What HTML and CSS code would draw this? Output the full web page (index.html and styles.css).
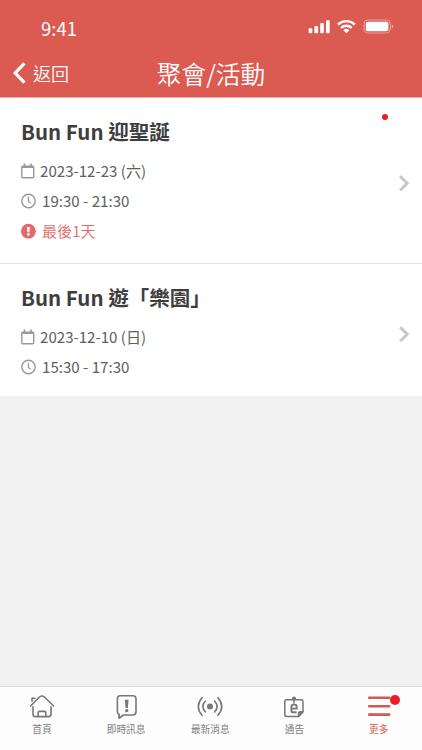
FILE: index.html
```html
<!DOCTYPE html>
<html lang="zh-Hant">
<head>
<meta charset="utf-8">
<title>聚會/活動</title>
<link rel="stylesheet" href="styles.css">
</head>
<body>
<div class="app">
  <header class="header">
    <div class="status">
      <span class="clock">9:41</span>
      <svg class="status-icons" width="88" height="16" viewBox="0 0 88 16" fill="#fff">
        <rect x="1.6" y="9.2" width="3.7" height="5" rx="1"/>
        <rect x="7.4" y="7" width="3.7" height="7.2" rx="1"/>
        <rect x="13.2" y="4" width="3.7" height="10.2" rx="1"/>
        <rect x="19" y="1.2" width="3.7" height="13" rx="1"/>
        <g fill="none" stroke="#fff" stroke-width="2.4">
          <path d="M31 5.6a12 12 0 0 1 16.8 0"/>
          <path d="M34.1 8.9a7.6 7.6 0 0 1 10.6 0"/>
        </g>
        <path d="M36.4 11.2a4.3 4.3 0 0 1 6 0L39.4 14.2z"/>
        <rect x="57" y="1" width="26.2" height="13" rx="3.6" fill="none" stroke="#fff" stroke-opacity=".42"/>
        <rect x="58.8" y="2.8" width="22.6" height="9.4" rx="1.8"/>
        <path d="M84.6 5.6q1.7.5 1.7 2t-1.7 2z" fill-opacity=".5"/>
      </svg>
    </div>
    <div class="nav">
      <a class="back">
        <svg width="14" height="22" viewBox="0 0 14 22" fill="none" stroke="#fff" stroke-width="3.2"><path d="M11.4 1.4 2.2 11l9.2 9.6"/></svg>
        <span>返回</span>
      </a>
      <h1 class="page-title">聚會/活動</h1>
    </div>
  </header>

  <main class="list">
    <article class="event">
      <div class="event-body">
        <h2>Bun Fun 迎聖誕</h2>
        <p class="date"><svg width="14" height="16" viewBox="0 0 14 16"><use href="#calendar"/></svg><span>2023-12-23 (六)</span></p>
        <p><svg width="16" height="16" viewBox="0 0 16 16"><use href="#time"/></svg><span>19:30 - 21:30</span></p>
        <p class="alert"><svg width="16" height="16" viewBox="0 0 16 16"><circle cx="7.4" cy="8.2" r="7.4" fill="#e4696a"/><path d="M6 4h2.8L8.4 9.2h-2z" fill="#fff"/><circle cx="7.4" cy="11.4" r="1.3" fill="#fff"/></svg><span>最後1天</span></p>
      </div>
      <svg class="chevron" width="12" height="18" viewBox="0 0 12 18"><use href="#next"/></svg>
      <i class="unread"></i>
    </article>
    <article class="event">
      <div class="event-body">
        <h2>Bun Fun 遊「樂園」</h2>
        <p class="date"><svg width="14" height="16" viewBox="0 0 14 16"><use href="#calendar"/></svg><span>2023-12-10 (日)</span></p>
        <p><svg width="16" height="16" viewBox="0 0 16 16"><use href="#time"/></svg><span>15:30 - 17:30</span></p>
      </div>
      <svg class="chevron" width="12" height="18" viewBox="0 0 12 18"><use href="#next"/></svg>
    </article>
  </main>

  <nav class="tabs">
    <a class="tab">
      <svg width="28" height="26" viewBox="0 0 28 26" fill="none" stroke="#777" stroke-width="1.6" stroke-linecap="round" stroke-linejoin="round">
        <path d="M2.6 13 11.5 4q2.5-2 5 0L25.6 13M5 13.8v7.4q0 2.4 2.4 2.4h13.2q2.4 0 2.4-2.4v-7.4M10.2 23.4v-3.6q0-1.4 1.4-1.4h4.8q1.4 0 1.4 1.4v3.6M4 8.2V5.2h3"/>
      </svg>
      <span>首頁</span>
    </a>
    <a class="tab">
      <svg width="28" height="26" viewBox="0 0 28 26" fill="none" stroke="#777" stroke-width="1.6" stroke-linejoin="round">
        <path d="M8 2.8h12.8q3.2 0 3.2 3.2v12.8q0 3.2-3.2 3.2h-9.4l-4 3q-.8.2-.6-.8l.6-2.6q-2-.6-2-2.8V6q0-3.2 2.6-3.2z"/>
        <path d="M12.8 6.8h3.8L15.8 15h-2.2z" fill="#777" stroke="none"/><circle cx="14.7" cy="17.6" r="1.7" fill="#777" stroke="none"/>
      </svg>
      <span>即時訊息</span>
    </a>
    <a class="tab">
      <svg width="28" height="26" viewBox="0 0 28 26" fill="none" stroke="#777" stroke-width="1.6" stroke-linecap="round">
        <circle cx="14" cy="13.5" r="3" fill="#777" stroke="none"/>
        <path d="M9.4 8q-5 5.5 0 11M18.6 8q5 5.5 0 11M6 4.7q-7.4 8.8 0 17.6M22 4.7q7.4 8.8 0 17.6"/>
      </svg>
      <span>最新消息</span>
    </a>
    <a class="tab">
      <svg width="28" height="26" viewBox="0 0 28 26" fill="none" stroke="#777" stroke-width="1.5" stroke-linejoin="round">
        <path d="M12 6.8H6.4q-1.6 0-1.6 1.6v13.2q0 1.8 1.8 1.8h12l4.4-4.6V8.4q0-1.6-1.6-1.6H16"/>
        <path d="M18.6 23.2v-2.6q0-1.8 1.8-1.8h2.6z" fill="#777"/>
        <circle cx="14" cy="5.8" r="2.2" fill="#777" stroke="none"/><path d="M14 6v4.4"/>
        <path d="M11.4 15.6h5.2v-2.2q0-1.8-1.8-1.8h-1.6q-1.8 0-1.8 1.8v4q0 1.9 1.8 1.9h3.4" stroke-width="1.9" stroke-linejoin="miter"/>
      </svg>
      <span>通告</span>
    </a>
    <a class="tab active">
      <svg width="28" height="26" viewBox="0 0 28 26" fill="none" stroke="#cf5b56" stroke-width="2.6" stroke-linecap="round">
        <path d="M4.2 4.8h20M4.2 13.2h20M4.2 21.6h20"/>
      </svg>
      <i class="badge"></i>
      <span>更多</span>
    </a>
  </nav>
</div>

<svg class="defs" width="0" height="0">
  <symbol id="calendar" viewBox="0 0 14 16">
    <rect x=".8" y="3.2" width="11.9" height="11.6" rx="1" fill="none" stroke="#999" stroke-width="1.4"/>
    <path d="M1 4.3h11.6M3.5.6v3M10 .6v3" stroke="#999" stroke-width="1.6"/>
  </symbol>
  <symbol id="time" viewBox="0 0 16 16">
    <circle cx="7.5" cy="8" r="6.7" fill="none" stroke="#999" stroke-width="1.4"/>
    <path d="M7.4 3.8v4.6l2.4 1.8" fill="none" stroke="#999" stroke-width="1.3"/>
  </symbol>
  <symbol id="next" viewBox="0 0 12 18">
    <path d="m2.2 2.2 7 7-7 7" fill="none" stroke="#c8c8c8" stroke-width="3"/>
  </symbol>
</svg>
</body>
</html>
```
FILE: styles.css
```css
* { box-sizing: border-box; margin: 0; padding: 0; }

body {
  font-family: "Noto Sans CJK TC", "Noto Sans", sans-serif;
  background: #f1f1f1;
}

.app {
  display: flex;
  flex-direction: column;
  width: 422px;
  height: 750px;
  overflow: hidden;
}

.defs { position: absolute; }

.header {
  height: 98px;
  padding-top: 13px;
  background: #db5a51;
  border-bottom: 1px solid #eba9a4;
  color: #fff;
}

.status {
  display: flex;
  justify-content: space-between;
  align-items: center;
  height: 28px;
  padding: 0 27px 0 41px;
}

.clock { font-size: 18.5px; line-height: 28px; padding-top: 1px; }

.nav {
  display: grid;
  grid-template-columns: 1fr auto 1fr;
  align-items: center;
  height: 63px;
}

.back {
  display: flex;
  align-items: center;
  gap: 6px;
  padding-left: 13px;
  font-size: 18px;
  font-weight: 350;
  line-height: 24px;
}

.back span { padding-top: 1px; }

.page-title {
  font-size: 24.7px;
  font-weight: 350;
  line-height: 36px;
}

.list { flex: 1; }

.event {
  position: relative;
  display: flex;
  justify-content: space-between;
  align-items: center;
  padding: 17px 12px 17px 21px;
  background: #fff;
}

.event + .event {
  border-top: 1px solid #e4e4e4;
  padding-bottom: 14px;
}

.event h2 {
  margin-bottom: 9px;
  color: #3e3e3e;
  font-size: 20.5px;
  font-weight: 700;
  line-height: 32px;
}

.event p {
  display: flex;
  align-items: center;
  gap: 5px;
  height: 30px;
  color: #606060;
  font-size: 15.1px;
  line-height: 28px;
}

.event p span { padding-bottom: 2px; }

.event .alert { color: #e4696a; font-weight: 350; }

.chevron { margin-top: 4px; }

.unread {
  position: absolute;
  top: 16px;
  right: 34px;
  width: 6px;
  height: 6px;
  border-radius: 50%;
  background: #e41f26;
}

.tabs {
  display: grid;
  grid-template-columns: 84px repeat(4, 84.2px);
  height: 64px;
  padding-top: 6px;
  border-top: 1px solid #ddd;
  background: #fdfdfd;
}

.tab {
  position: relative;
  display: flex;
  flex-direction: column;
  align-items: center;
  color: #808080;
  font-size: 9.7px;
  line-height: 18px;
}

.tab span { margin-top: 1px; }

.active { color: #d45d58; }

.badge {
  position: absolute;
  top: 2px;
  right: 21px;
  width: 10px;
  height: 10px;
  border-radius: 50%;
  background: #ed1c24;
}
```
